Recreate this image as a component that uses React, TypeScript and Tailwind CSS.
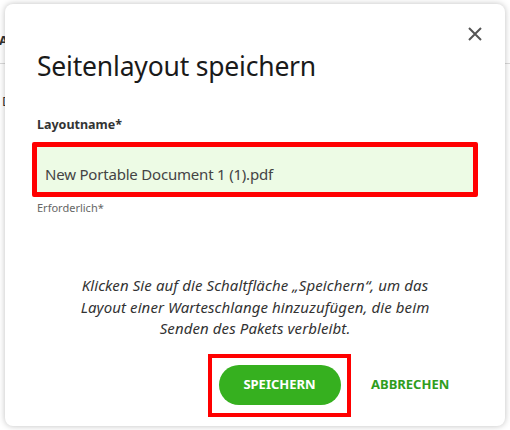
import React from "react";

export default function App() {
  return (
    <div className="relative w-[510px] h-[430px] overflow-hidden bg-[#f3f3f3] font-['Noto_Sans',sans-serif]">
      {/* background page content */}
      <div className="flex flex-col bg-white h-full">
        <div className="h-[64px] border-b border-[#d9d9d9] flex items-center">
          <span className="text-[13px] font-bold text-[#333] -ml-[1px] mt-[18px]">A</span>
        </div>
        <div className="pt-[24px]">
          <span className="text-[13px] text-[#333] ml-[2px]">D</span>
        </div>
      </div>

      {/* dialog */}
      <div className="absolute left-[5px] top-[4px] w-[500px] h-[422px] bg-white rounded-[8px] shadow-[0_0_6px_rgba(0,0,0,0.25)] flex flex-col px-[32px]">
        <button className="absolute right-[23px] top-[23px] w-[14px] h-[14px] p-0" aria-label="close">
          <svg width="14" height="14" viewBox="0 0 14 14">
            <path d="M1 1L13 13M13 1L1 13" stroke="#555" strokeWidth="2" />
          </svg>
        </button>

        <h1 className="mt-[45px] text-[26.5px] leading-[34px] text-[#1a1a1a] font-normal tracking-[-0.2px]">
          Seitenlayout speichern
        </h1>

        <label className="mt-[33px] text-[12.5px] leading-[18px] font-bold text-[#333]">Layoutname*</label>

        <div className="mt-[8px] -ml-[5px] w-[446px] h-[55px] border-[5px] border-[#ff0000] rounded-[2px] bg-[#edfbe5] flex items-center pl-[8px] pt-[9px]">
          <span className="text-[15px] text-[#444] tracking-[-0.2px]">New Portable Document 1 (1).pdf</span>
        </div>

        <div className="mt-[3px] text-[11px] leading-[16px] text-[#666]">Erforderlich*</div>

        <p className="mt-[59px] text-center italic text-[15px] leading-[21.5px] text-[#333] tracking-[0.1px]">
          Klicken Sie auf die Schaltfläche „Speichern“, um das
          <br />
          Layout einer Warteschlange hinzuzufügen, die beim
          <br />
          Senden des Pakets verbleibt.
        </p>

        <div className="mt-[14px] flex items-center">
          <div className="ml-[171px] w-[143px] h-[63px] border-[4px] border-[#ff0000] flex items-center justify-center">
            <button className="w-[122px] h-[40px] rounded-full bg-[#36b01f] text-white text-[13px] font-bold">
              SPEICHERN
            </button>
          </div>
          <button className="ml-[20px] text-[13px] font-bold text-[#2f9d1d]">ABBRECHEN</button>
        </div>
      </div>
    </div>
  );
}
